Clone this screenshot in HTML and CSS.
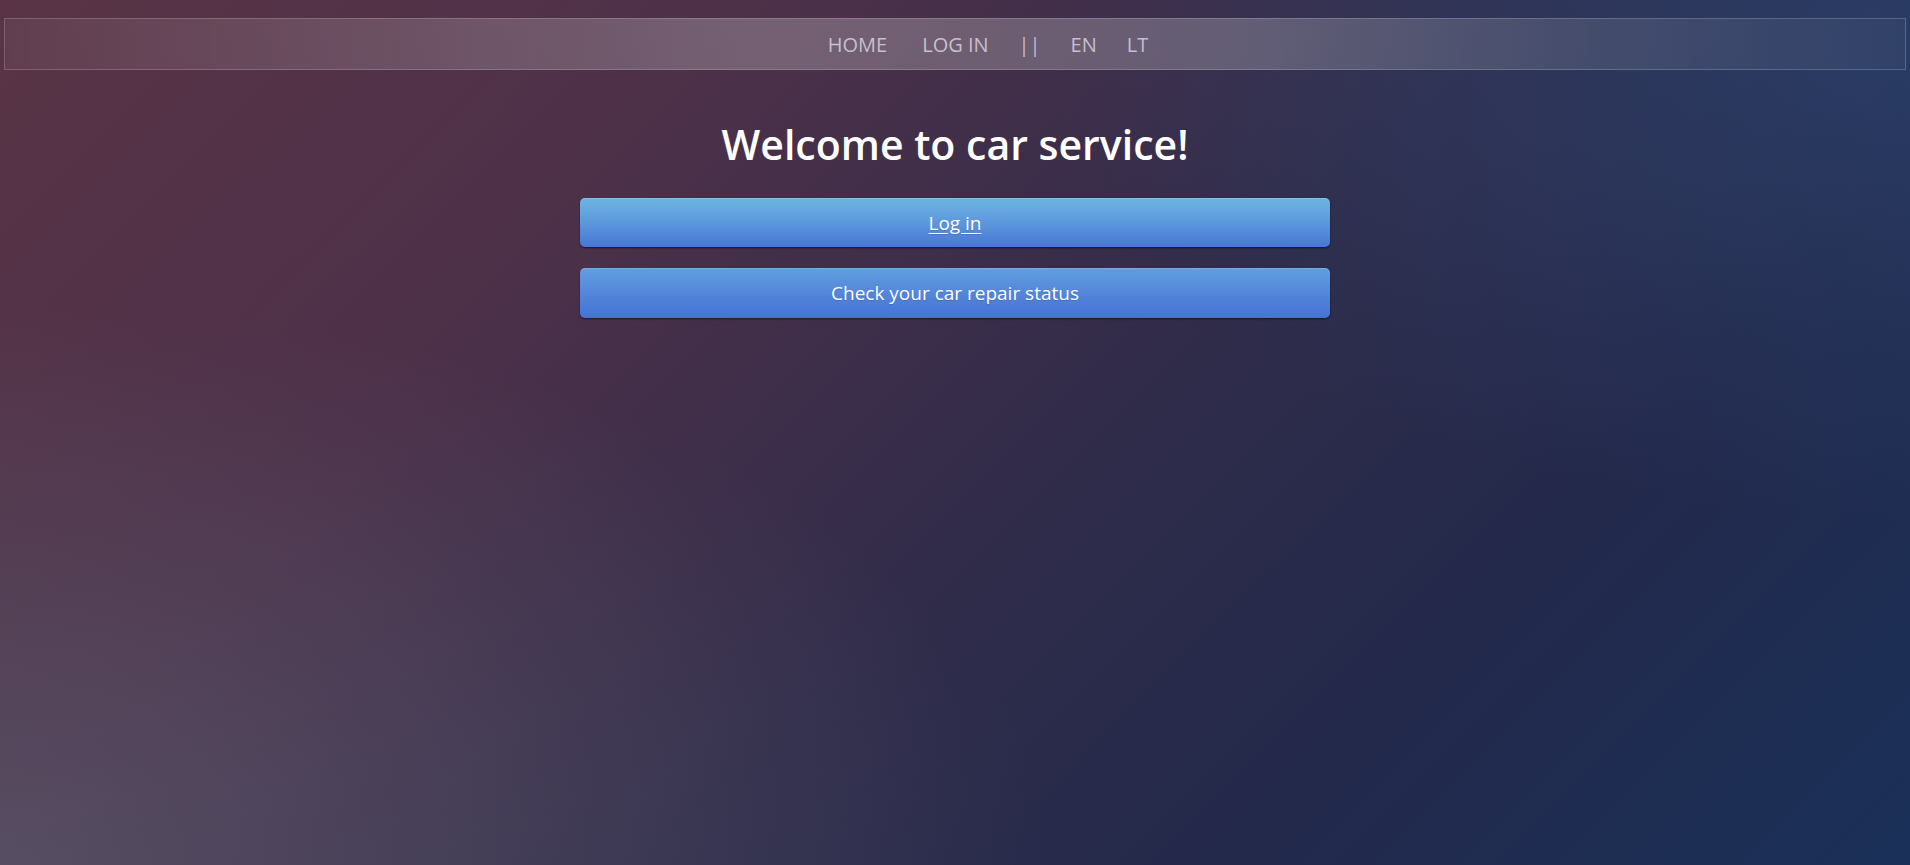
FILE: index.html
```html
<!DOCTYPE html>
<html lang="en">
<head>
<meta charset="utf-8">
<title>Car service</title>
<link rel="stylesheet" href="styles.css">
</head>
<body>
<nav class="topnav">
  <ul class="nav-list">
    <li class="nav-item"><a href="#">HOME</a></li>
    <li class="nav-item nav-item-wide"><a href="#">LOG IN</a></li>
    <li class="nav-item"><span class="sep">||</span></li>
    <li class="nav-item"><a href="#">EN</a></li>
    <li class="nav-item"><a href="#">LT</a></li>
  </ul>
</nav>
<main class="content">
  <h1 class="title">Welcome to car service!</h1>
  <a class="btn btn-login" href="#">Log in</a>
  <a class="btn btn-status" href="#">Check your car repair status</a>
</main>
</body>
</html>
```

FILE: styles.css
```css
html, body {
  height: 100%;
}
body {
  margin: 0;
  font-family: "Open Sans", "Liberation Sans", sans-serif;
  color: #fff;
  background-color: #2c2b48;
  background-image:
    radial-gradient(ellipse 55% 65% at 0% 100%, rgba(95, 97, 115, 0.6), rgba(95, 97, 115, 0) 100%),
    radial-gradient(ellipse 45% 55% at 100% 5%, rgba(45, 72, 118, 0.6), rgba(45, 72, 118, 0) 100%),
    linear-gradient(135deg, #5a3446 0%, #4b3049 30%, #302c4a 55%, #23294b 75%, #1a3058 100%);
  overflow: hidden;
}

.topnav {
  margin: 18px 4px 0;
  height: 52px;
  box-sizing: border-box;
  border: 1px solid rgba(255, 255, 255, 0.18);
  background: linear-gradient(to right,
    rgba(255, 255, 255, 0.05) 0%,
    rgba(255, 255, 255, 0.15) 20%,
    rgba(255, 255, 255, 0.23) 40%,
    rgba(255, 255, 255, 0.22) 65%,
    rgba(255, 255, 255, 0.10) 85%,
    rgba(255, 255, 255, 0.03) 100%);
  display: flex;
  align-items: center;
  justify-content: center;
}

.nav-list {
  list-style: none;
  margin: 0;
  padding: 0 0 0 66px;
  display: flex;
  align-items: center;
  gap: 30px;
  font-size: 20px;
  line-height: 27px;
}

.nav-item-wide {
  margin-left: 5px;
}

.nav-list a,
.nav-list .sep {
  color: rgba(225, 220, 232, 0.78);
  text-decoration: none;
}

.content {
  display: flex;
  flex-direction: column;
  align-items: center;
  padding-top: 43px;
}

.title {
  margin: 0 0 23px;
  font-size: 41px;
  font-weight: 600;
  line-height: 62px;
  color: #fff;
}

.btn {
  display: flex;
  align-items: center;
  justify-content: center;
  width: 750px;
  height: 49px;
  box-sizing: border-box;
  border-radius: 5px;
  color: #fff;
  font-size: 19px;
  box-shadow: 0 1px 2px rgba(0, 0, 0, 0.55), inset 0 1px 0 rgba(255, 255, 255, 0.15);
  text-shadow: 0 1px 1px rgba(0, 0, 0, 0.15);
}

.btn-login {
  background: linear-gradient(to bottom, #6db5e1 0%, #5c98dc 50%, #4876d5 100%);
  text-decoration: underline;
  text-underline-offset: 3px;
}

.btn-status {
  margin-top: 21px;
  height: 50px;
  background: linear-gradient(to bottom, #619fdf 0%, #5486da 50%, #4573d5 100%);
  text-decoration: none;
}
```
